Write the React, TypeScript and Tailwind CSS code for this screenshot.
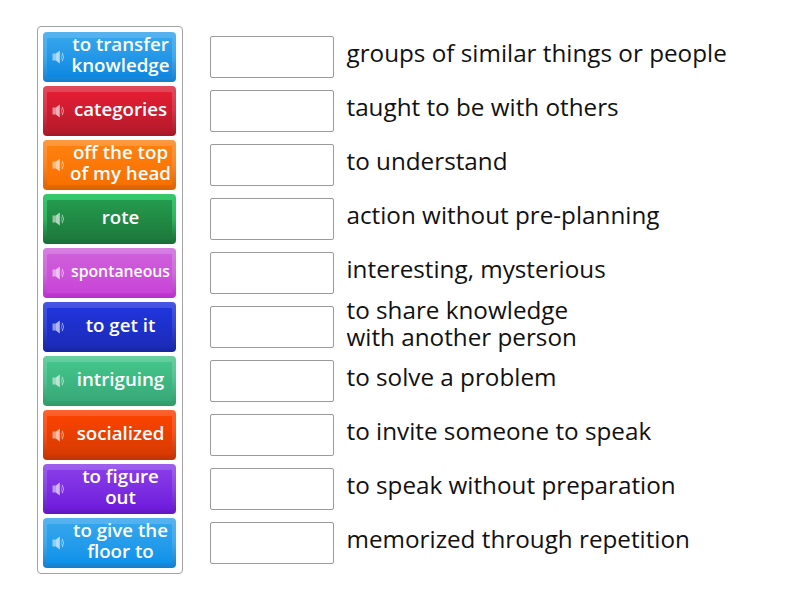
const words = [
  { lines: ["to transfer", "knowledge"], edge: "from-[#57b3ef] via-[#3fa9ee] to-[#1180cf]", face: "from-[#34a5ec] to-[#0c88e2]" },
  { lines: ["categories"], edge: "from-[#e14a5b] via-[#d93447] to-[#a51726]", face: "from-[#e41d33] to-[#b61a2b]" },
  { lines: ["off the top", "of my head"], edge: "from-[#ff993f] via-[#fa8726] to-[#dc6200]", face: "from-[#ff800f] to-[#f77000]" },
  { lines: ["rote"], edge: "from-[#35ca6b] via-[#2db45d] to-[#176b36]", face: "from-[#249b4d] to-[#1d7a3d]" },
  { lines: ["spontaneous"], edge: "from-[#d680e1] via-[#cf6adb] to-[#ba2ccb]", face: "from-[#ce5fda] to-[#c944d8]", small: true },
  { lines: ["to get it"], edge: "from-[#4757e3] via-[#3343d2] to-[#1524a2]", face: "from-[#2035dc] to-[#1c2bb8]" },
  { lines: ["intriguing"], edge: "from-[#67cfa0] via-[#4fc092] to-[#2f9a66]", face: "from-[#43c48a] to-[#38a978]" },
  { lines: ["socialized"], edge: "from-[#ff622d] via-[#f65018] to-[#c03303]", face: "from-[#fa4300] to-[#d73b02]" },
  { lines: ["to figure", "out"], edge: "from-[#9f61ed] via-[#8843e2] to-[#6213c4]", face: "from-[#883be8] to-[#701bdc]" },
  { lines: ["to give the", "floor to"], edge: "from-[#57b3ef] via-[#3fa9ee] to-[#1180cf]", face: "from-[#34a5ec] to-[#0c92ea]" },
];

const definitions = [
  ["groups of similar things or people"],
  ["taught to be with others"],
  ["to understand"],
  ["action without pre-planning"],
  ["interesting, mysterious"],
  ["to share knowledge", "with another person"],
  ["to solve a problem"],
  ["to invite someone to speak"],
  ["to speak without preparation"],
  ["memorized through repetition"],
];

function SpeakerIcon() {
  return (
    <svg className="w-[13px] h-[14px] shrink-0 -mt-[2px]" viewBox="0 0 13 14" fill="none">
      <path d="M0.5 3.5H3.5V10.5H0.5Z" fill="white" fillOpacity="0.5" />
      <path d="M3.5 3.8L7.8 0.5V13.5L3.5 10.2Z" fill="white" fillOpacity="0.65" />
      <path d="M9.2 4.5Q10 7 9.2 9.5" stroke="white" strokeOpacity="0.3" />
      <path d="M10.2 2.8Q12.8 7 10.2 11.2" stroke="white" strokeOpacity="0.6" />
    </svg>
  );
}

// word text sits slightly differently for one line, two lines and the shrunk word
function wordStyle(w: { lines: string[]; small?: boolean }) {
  if (w.small) return "text-[15.8px] -mt-[4px]";
  return w.lines.length > 1 ? "text-[18.7px] -mt-[6px]" : "text-[18.7px] -mt-[4px]";
}

export default function App() {
  return (
    <div className="w-[800px] h-[600px] bg-white flex overflow-hidden font-['Open_Sans',sans-serif]">
      <div className="ml-[37px] mt-[26px] w-[146px] h-[548px] shrink-0 border border-[#a3a3a3] rounded-[4px] pt-[5px] pl-[5px] flex flex-col gap-1">
        {words.map((w) => (
          <button
            key={w.lines[0]}
            className={`w-[133px] h-[50px] shrink-0 rounded-[4px] pt-[6px] px-1 pb-[5px] bg-linear-to-b cursor-pointer ${w.edge}`}
          >
            <span className={`w-full h-full rounded-[1px] bg-linear-to-b flex items-center pl-[5px] ${w.face}`}>
              <SpeakerIcon />
              <span className={`w-[111px] shrink-0 text-center text-white font-semibold whitespace-nowrap leading-[20.5px] ${wordStyle(w)}`}>
                {w.lines.map((line) => (
                  <span key={line} className="block">{line}</span>
                ))}
              </span>
            </span>
          </button>
        ))}
      </div>

      <div className="ml-[27px] mt-[30px] flex flex-col">
        {definitions.map((lines) => (
          <div key={lines[0]} className="h-[54px] flex items-center">
            <div className="w-[124px] h-[42px] shrink-0 border border-[#9b9b9b] rounded-[2px]" />
            <p className={`ml-[12.5px] text-[24.25px] leading-[27px] text-[#111] whitespace-nowrap ${lines.length > 1 ? "-mt-[8px]" : "-mt-[10px]"}`}>
              {lines.map((line) => (
                <span key={line} className="block">{line}</span>
              ))}
            </p>
          </div>
        ))}
      </div>
    </div>
  );
}
